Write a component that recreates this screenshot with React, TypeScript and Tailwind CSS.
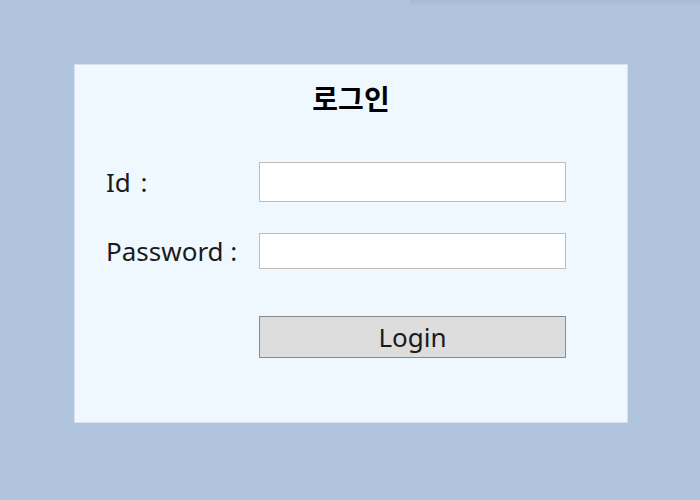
export default function App() {
  return (
    <div
      className="relative w-[700px] h-[500px] overflow-hidden bg-[#b0c4de] pt-[64px]"
      style={{ fontFamily: '"Noto Sans", "Noto Sans CJK KR", sans-serif' }}
    >
      <div className="absolute top-0 left-[410px] right-0 h-[6px] bg-gradient-to-b from-[#a8b8cf] to-transparent" />
      <form
        className="ml-[74px] w-[554px] h-[359px] bg-[#f0f8ff] border border-[#d6e0ee] flex flex-col"
        onSubmit={(e) => e.preventDefault()}
      >
        <h1 className="mt-[16px] text-center text-[28px] font-bold leading-[36px] text-black">
          로그인
        </h1>
        <div className="mt-[45px] ml-[31px] grid grid-cols-[153px_307px] items-center gap-y-[31px] text-[26px] leading-[34px] text-[#1a1a1a]">
          <label htmlFor="id">
            Id <span className="ml-[3px]">:</span>
          </label>
          <input id="id" type="text" className="h-[40px] bg-white border border-[#bcbcbc] outline-none px-2" />
          <label htmlFor="password">Password :</label>
          <input id="password" type="password" className="h-[36px] bg-white border border-[#bcbcbc] outline-none px-2" />
          <div />
          <button
            type="submit"
            className="mt-[16px] h-[42px] bg-[#dddddd] border border-[#8a8a8a] text-[26px] leading-[34px] text-[#1a1a1a]"
          >
            Login
          </button>
        </div>
      </form>
    </div>
  );
}
